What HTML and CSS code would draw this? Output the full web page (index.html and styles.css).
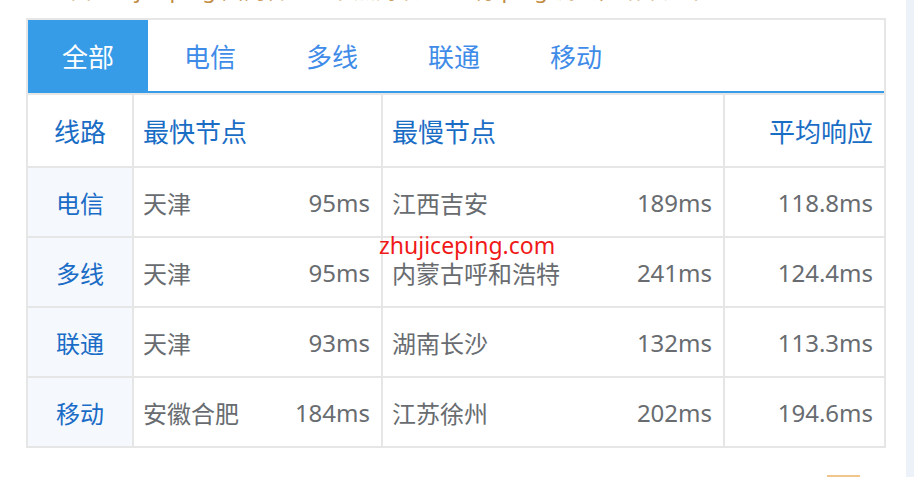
FILE: index.html
```html
<!DOCTYPE html>
<html lang="zh-CN">
<head>
  <meta charset="UTF-8" />
  <meta name="viewport" content="width=device-width, initial-scale=1.0"/>
  <title>Ping 测试结果</title>
  <link rel="stylesheet" href="styles.css">
</head>
<body>
  <div class="page">
    <main class="content">
      <div class="intro">
        <p>由 zhujiceping 国内各地区节点对该 IP 进行 ping 测试，结果如下：</p>
      </div>

      <div class="panel">
        <div class="tabs">
          <div class="tab active">全部</div>
          <div class="tab">电信</div>
          <div class="tab">多线</div>
          <div class="tab">联通</div>
          <div class="tab">移动</div>
        </div>

        <div class="grid">
          <div class="row head">
            <div class="cell center">线路</div>
            <div class="cell">最快节点</div>
            <div class="cell">最慢节点</div>
            <div class="cell right">平均响应</div>
          </div>
          <div class="row">
            <div class="cell center isp">电信</div>
            <div class="cell split"><span>天津</span><span>95ms</span></div>
            <div class="cell split"><span>江西吉安</span><span>189ms</span></div>
            <div class="cell right">118.8ms</div>
          </div>
          <div class="row">
            <div class="cell center isp">多线</div>
            <div class="cell split"><span>天津</span><span>95ms</span></div>
            <div class="cell split"><span>内蒙古呼和浩特</span><span>241ms</span></div>
            <div class="cell right">124.4ms</div>
          </div>
          <div class="row">
            <div class="cell center isp">联通</div>
            <div class="cell split"><span>天津</span><span>93ms</span></div>
            <div class="cell split"><span>湖南长沙</span><span>132ms</span></div>
            <div class="cell right">113.3ms</div>
          </div>
          <div class="row">
            <div class="cell center isp">移动</div>
            <div class="cell split"><span>安徽合肥</span><span>184ms</span></div>
            <div class="cell split"><span>江苏徐州</span><span>202ms</span></div>
            <div class="cell right">194.6ms</div>
          </div>
        </div>

        <div class="watermark">zhujiceping.com</div>
      </div>

      <div class="corner"></div>
    </main>
    <aside class="side"></aside>
  </div>
</body>
</html>
```

FILE: styles.css
```css
* { margin: 0; padding: 0; box-sizing: border-box; }

html, body {
  height: 100%;
  overflow: hidden;
}

body {
  font-family: "Noto Sans", "Noto Sans CJK SC", sans-serif;
  background: #ffffff;
}

.page {
  display: flex;
  height: 100vh;
}

.content {
  flex: 1;
}

.side {
  width: 8px;
  background: #edf2f9;
}

/* cut-off line of text above the panel */
.intro {
  height: 18px;
  overflow: hidden;
  padding-left: 70px;
}

.intro p {
  margin-top: -24px;
  font-size: 22px;
  line-height: 26px;
  color: #c28b3d;
  white-space: nowrap;
}

.panel {
  position: relative;
  width: 860px;
  margin-left: 26px;
  border: 2px solid #e6e6e6;
}

.tabs {
  display: flex;
  height: 73px;
  border-bottom: 2px solid #379ce7;
}

.tab {
  width: 120px;
  margin-right: 2px;
  display: flex;
  justify-content: center;
  align-items: center;
  font-size: 26px;
  color: #3f8ce8;
}

.tab.active {
  background: #379ce7;
  color: #ffffff;
}

.grid {
  display: flex;
  flex-direction: column;
  gap: 2px;
  padding-top: 2px;
  background: #e6e6e6;
}

.row {
  display: grid;
  grid-template-columns: 104px 247px 340px 1fr;
  gap: 2px;
  height: 68px;
}

.row.head {
  height: 71px;
}

.cell {
  display: flex;
  align-items: center;
  padding: 0 11px 0 9px;
  background: #ffffff;
  font-size: 24px;
  color: #686c70;
  white-space: nowrap;
}

.head .cell {
  font-size: 26px;
  color: #1a6dc5;
}

.cell.center { justify-content: center; padding: 0; }
.cell.right { justify-content: flex-end; }
.cell.split { justify-content: space-between; }

.cell.isp {
  background: #f5f9fd;
  color: #1a6cc6;
}

.watermark {
  position: absolute;
  left: 351px;
  top: 214px;
  font-size: 23px;
  line-height: 23px;
  color: #f01818;
}

.corner {
  width: 33px;
  height: 10px;
  margin: 27px 0 0 827px;
  background: #f2c68a;
}
```
